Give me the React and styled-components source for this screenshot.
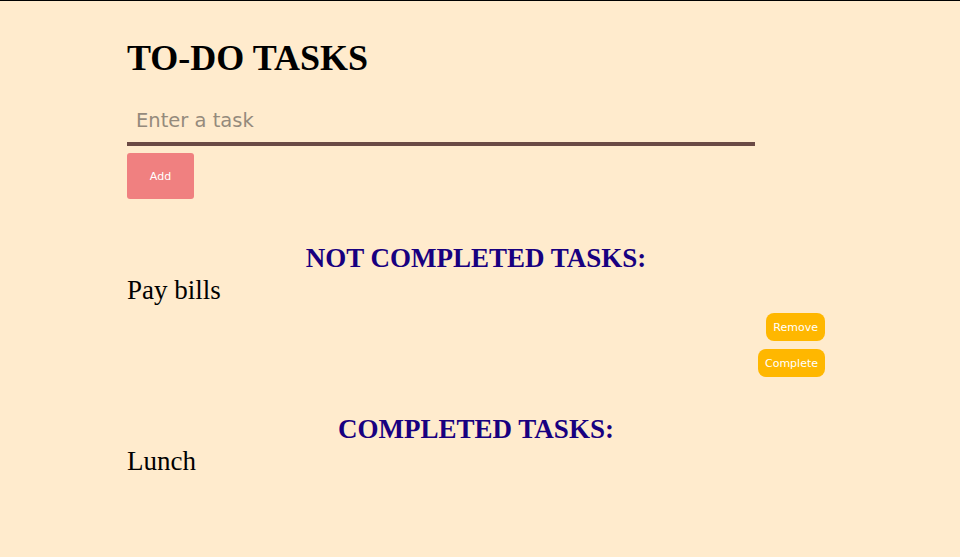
import React from "react";
import styled, { createGlobalStyle } from "styled-components";

const GlobalStyle = createGlobalStyle`
  html, body {
    margin: 0;
    padding: 0;
    background: #ffebcd;
  }
  body {
    border-top: 1px solid #000;
    min-height: 556px;
    font-family: "Liberation Serif", serif;
  }
`;

const Container = styled.div`
  width: 698px;
  margin-left: 127px;
  padding-top: 36px;
`;

const Title = styled.h1`
  font-family: "Liberation Serif", serif;
  font-size: 36px;
  font-weight: bold;
  color: #000;
  margin: 0 0 26px;
  line-height: 42px;
`;

const Input = styled.input`
  display: block;
  width: 90%;
  box-sizing: border-box;
  border: none;
  border-bottom: 4px solid #6b4a45;
  background: transparent;
  font-family: "DejaVu Sans", sans-serif;
  font-size: 19.5px;
  padding: 4px 9px 10px;
  outline: none;

  &::placeholder {
    color: #958a7c;
  }
`;

const AddButton = styled.button`
  display: block;
  margin-top: 7px;
  width: 67px;
  height: 46px;
  border: none;
  border-radius: 3px;
  background: #f08080;
  color: #fff;
  font-family: "DejaVu Sans", sans-serif;
  font-size: 11px;
`;

const Section = styled.section`
  margin-top: ${(p) => p.$top}px;
`;

const SectionTitle = styled.h2`
  font-family: "Liberation Serif", serif;
  font-size: 27px;
  font-weight: bold;
  color: #180080;
  text-align: center;
  margin: 0;
  line-height: 30px;
`;

const Task = styled.div`
  font-size: 27px;
  line-height: 34px;
  color: #000;
`;

const Actions = styled.div`
  display: flex;
  flex-direction: column;
  align-items: flex-end;
  gap: 8px;
  margin-top: 6px;
`;

const ActionButton = styled.button`
  border: none;
  border-radius: 8px;
  background: #ffb700;
  color: #fff;
  font-family: "DejaVu Sans", sans-serif;
  font-size: 11px;
  height: 28px;
  padding: 0 7px;
`;

export default function App() {
  return (
    <>
      <GlobalStyle />
      <Container>
        <Title>TO-DO TASKS</Title>
        <Input placeholder="Enter a task" />
        <AddButton>Add</AddButton>
        <Section $top={44}>
          <SectionTitle>NOT COMPLETED TASKS:</SectionTitle>
          <Task>Pay bills</Task>
          <Actions>
            <ActionButton>Remove</ActionButton>
            <ActionButton>Complete</ActionButton>
          </Actions>
        </Section>
        <Section $top={37}>
          <SectionTitle>COMPLETED TASKS:</SectionTitle>
          <Task>Lunch</Task>
        </Section>
      </Container>
    </>
  );
}
